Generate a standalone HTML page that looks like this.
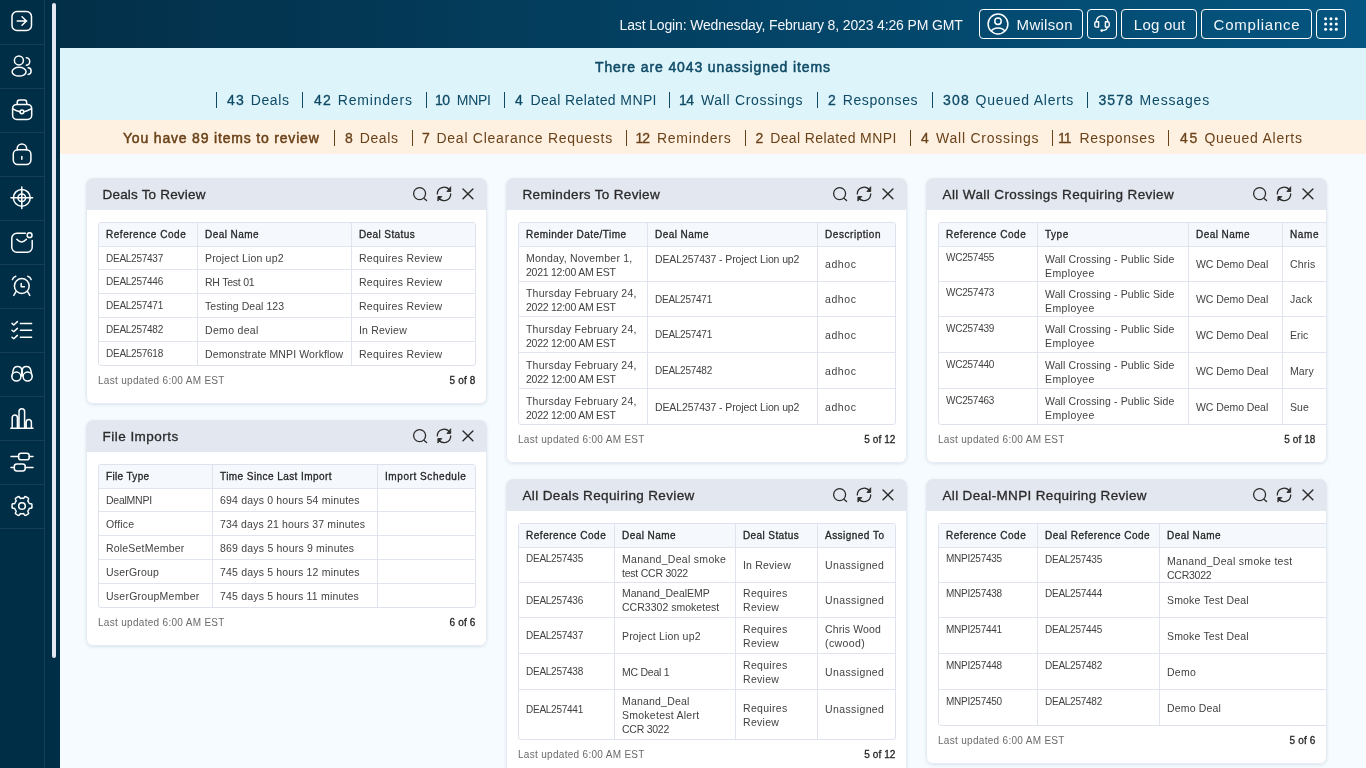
<!DOCTYPE html>
<html><head><meta charset="utf-8"><title>Dashboard</title><style>
*{margin:0;padding:0;box-sizing:border-box}
html,body{width:1366px;height:768px;overflow:hidden;background:#f5fbfe;font-family:"Liberation Sans",sans-serif}
#wrap{position:absolute;left:0;top:0;width:1366px;height:768px;will-change:transform}
#sidebar{position:absolute;left:0;top:0;width:45px;height:768px;background:#002e46;border-right:1px solid #173f57}
.si{position:absolute;left:0;width:44px;height:44px}
.si svg{position:absolute;left:0;top:0}
.sdiv{position:absolute;left:0;width:44px;height:1px;background:#173f57}
#sbtrack{position:absolute;left:45px;top:0;width:15px;height:768px;background:#002e46}
#thumb{position:absolute;left:7px;top:3px;width:4px;height:655px;border-radius:2px;background:#e4e7f2}
#header{position:absolute;left:60px;top:0;width:1306px;height:48px;background:linear-gradient(90deg,#032f48 0%,#045580 100%);color:#fff}
.ht0{position:absolute;line-height:16px;white-space:nowrap;color:#f4f7fa}
.hb{position:absolute;top:9px;height:30px;border:1px solid #fff;border-radius:4px;display:flex;align-items:center;justify-content:center}
.hsvg{position:absolute;display:block}
.gdot{position:absolute;width:2.6px;height:2.6px;border-radius:50%;background:#fff}
.uic{position:absolute;left:6.5px;top:2.5px;width:24px;height:24px}
.uic svg{display:block}
#bblue{position:absolute;left:60px;top:48px;width:1306px;height:72px;background:#ddf4fa;color:#0f4a66}
#bpeach{position:absolute;left:60px;top:120px;width:1306px;height:34px;background:#fff1e2;color:#6a4219}
.bline{position:absolute;left:0;top:0;width:100%;height:100%}
.bt{position:absolute;white-space:nowrap;line-height:18px}
.bt.semi{-webkit-text-stroke:0.5px currentColor !important}
.sep{position:absolute;width:1px;height:16px;background:currentColor}
#bblue .sep{top:44px}
#bpeach .sep{top:10px}
.card{position:absolute;background:#fff;border-radius:7px;box-shadow:0 1px 3px rgba(120,140,170,0.2);overflow:hidden}
.cbd{position:absolute;left:0;right:0;top:31px;bottom:0;border:1px solid #e6eaf2;border-top:none;border-radius:0 0 7px 7px}
.ch{position:absolute;left:0;top:0;width:100%;height:32px;background:#e3e7f0}
.ctitle{position:absolute;line-height:16px;color:#2a2a2a;white-space:nowrap}
.ico{position:absolute;width:16px;height:16px}
.ico svg{display:block}
.cico{display:block}
.tb{position:absolute;border:1px solid #dde2ee;border-radius:3px;overflow:hidden}
.thbg{position:absolute;left:0;top:0;width:100%;background:#f5f9fd}
.hl1{position:absolute;left:0;width:100%;height:1px;background:#dfe4ef}
.vl1{position:absolute;top:0;width:1px;height:100%;background:#dfe4ef}
.th{position:absolute;line-height:14px;color:#262626;white-space:nowrap}
.td{position:absolute;line-height:14px;color:#424242;white-space:nowrap}
.lu{position:absolute;line-height:14px;color:#6b6b6b;white-space:nowrap}
.cnt{position:absolute;line-height:14px;color:#262626;white-space:nowrap}
</style></head>
<body><div id="wrap"><div id="sidebar"><div class="si" style="top:0px"><svg width="44" height="44" viewBox="0 0 44 44" fill="none" stroke="#fff" stroke-width="1.5" stroke-linecap="round" stroke-linejoin="round"><rect x="12" y="11.5" width="19.5" height="19" rx="5"/><path d="M17.2 21h9.5M22 16.8l4.4 4.2-4.4 4.2"/></svg></div><div class="si" style="top:44px"><svg width="44" height="44" viewBox="0 0 44 44" fill="none" stroke="#fff" stroke-width="1.5" stroke-linecap="round" stroke-linejoin="round"><circle cx="18.9" cy="16.4" r="4.5"/><ellipse cx="19.1" cy="27.7" rx="7" ry="4.4"/><path d="M26.3 13.7A3.4 3.8 0 0 1 26.3 21.3M28.1 23.8A3 3.3 0 0 1 28.1 30.4"/></svg></div><div class="si" style="top:88px"><svg width="44" height="44" viewBox="0 0 44 44" fill="none" stroke="#fff" stroke-width="1.5" stroke-linecap="round" stroke-linejoin="round"><rect x="12.6" y="16.4" width="19.1" height="15.1" rx="4.2"/><path d="M17.2 16.2v-1.8a2.4 2.4 0 0 1 2.4 -2.4h4.7a2.4 2.4 0 0 1 2.4 2.4v1.8"/><path d="M12.8 20.8c2.8 1.6 5.4 2.6 7.2 3M23.8 23.8c1.8-0.4 4.4-1.4 7.2-3"/><circle cx="21.9" cy="23.8" r="1.9"/></svg></div><div class="si" style="top:132px"><svg width="44" height="44" viewBox="0 0 44 44" fill="none" stroke="#fff" stroke-width="1.5" stroke-linecap="round" stroke-linejoin="round"><rect x="13.3" y="17.8" width="17.6" height="14.6" rx="4.4"/><path d="M17.2 18v-1.4a4.6 4.6 0 0 1 9.4 0v1.4"/><path d="M21.8 24.6v2.6"/></svg></div><div class="si" style="top:176px"><svg width="44" height="44" viewBox="0 0 44 44" fill="none" stroke="#fff" stroke-width="1.5" stroke-linecap="round" stroke-linejoin="round"><circle cx="21.8" cy="21.8" r="8.4"/><circle cx="21.8" cy="21.8" r="3.8"/><path d="M21.8 11v21.6M11 21.8h21.6"/></svg></div><div class="si" style="top:220px"><svg width="44" height="44" viewBox="0 0 44 44" fill="none" stroke="#fff" stroke-width="1.5" stroke-linecap="round" stroke-linejoin="round"><path d="M25.4 13.2h-8.6a5 5 0 0 0 -5 5v9a5 5 0 0 0 5 5h10.4a5 5 0 0 0 5 -5v-6.8"/><circle cx="29.6" cy="15.2" r="2.4"/><path d="M16.8 19.2c3.2 3.6 6.4 3.6 9.6 0"/></svg></div><div class="si" style="top:264px"><svg width="44" height="44" viewBox="0 0 44 44" fill="none" stroke="#fff" stroke-width="1.5" stroke-linecap="round" stroke-linejoin="round"><circle cx="21.8" cy="22" r="7.4"/><path d="M21.2 19.4v3.4h3.2"/><path d="M12.4 15.6a5 5 0 0 1 3.4 -3.4M27.8 12.2a5 5 0 0 1 3.4 3.4M16 27.6l-2.2 3.8M27.6 27.6l2.2 3.8"/></svg></div><div class="si" style="top:308px"><svg width="44" height="44" viewBox="0 0 44 44" fill="none" stroke="#fff" stroke-width="1.5" stroke-linecap="round" stroke-linejoin="round"><path d="M12 15.4l1.8 1.6l3.6 -3.4M12 22.2l1.8 1.6l3.6 -3.4M12 29.2l1.8 1.6l3.6 -3.4"/><path d="M20.4 15.4h11.2M20.4 22.2h11.2M20.4 29.2h11.2"/></svg></div><div class="si" style="top:352px"><svg width="44" height="44" viewBox="0 0 44 44" fill="none" stroke="#fff" stroke-width="1.5" stroke-linecap="round" stroke-linejoin="round"><path d="M11.9 24.6L13.2 18.2C13.7 15.8 15.4 14.45 17.6 14.45C20 14.45 21.7 15.8 21.7 18.2V24M32.1 24.6L30.8 18.2C30.3 15.8 28.6 14.45 26.4 14.45C24 14.45 22.3 15.8 22.3 18.2V24"/><circle cx="16.4" cy="24.6" r="4.5" fill="#002e46"/><circle cx="27.6" cy="24.6" r="4.5" fill="#002e46"/></svg></div><div class="si" style="top:396px"><svg width="44" height="44" viewBox="0 0 44 44" fill="none" stroke="#fff" stroke-width="1.5" stroke-linecap="round" stroke-linejoin="round"><path d="M10.8 32.2h22.2"/><path d="M12.2 32v-10.4a2.6 2.6 0 0 1 5.2 0v10.4M19 32v-16.4a2.8 2.8 0 0 1 5.6 0v16.4M26.2 32v-5.8a2.6 2.6 0 0 1 5.2 0v5.8"/></svg></div><div class="si" style="top:440px"><svg width="44" height="44" viewBox="0 0 44 44" fill="none" stroke="#fff" stroke-width="1.5" stroke-linecap="round" stroke-linejoin="round"><path d="M11 16.6h7.6M29.2 16.6h3.8M11 27.5h3.4M25.2 27.5h7.8"/><rect x="18.6" y="13.2" width="10.6" height="6.6" rx="2.4"/><rect x="14.3" y="24" width="10.9" height="7" rx="2.4"/></svg></div><div class="si" style="top:484px"><svg width="44" height="44" viewBox="0 0 44 44" fill="none" stroke="#fff" stroke-width="1.5" stroke-linecap="round" stroke-linejoin="round"><path d="M32.00 22.00L32.00 22.17L31.99 22.35L31.99 22.52L31.98 22.70L31.96 22.87L31.95 23.05L31.93 23.22L31.90 23.39L31.88 23.56L31.85 23.74L31.80 23.91L31.63 24.05L31.34 24.16L30.97 24.24L30.55 24.29L30.13 24.33L29.76 24.37L29.47 24.43L29.30 24.51L29.24 24.63L29.19 24.76L29.14 24.88L29.09 25.01L29.03 25.13L28.98 25.25L28.92 25.38L28.86 25.50L28.80 25.61L28.73 25.73L28.67 25.85L28.60 25.97L28.53 26.08L28.46 26.19L28.38 26.31L28.31 26.42L28.23 26.53L28.15 26.63L28.07 26.74L27.98 26.85L27.90 26.95L27.82 27.06L27.83 27.25L27.93 27.53L28.08 27.87L28.26 28.26L28.42 28.65L28.54 29.01L28.59 29.32L28.55 29.54L28.43 29.66L28.29 29.77L28.16 29.88L28.02 29.99L27.88 30.09L27.74 30.19L27.59 30.29L27.45 30.39L27.30 30.48L27.15 30.57L27.00 30.66L26.85 30.75L26.69 30.83L26.54 30.91L26.38 30.99L26.23 31.06L26.07 31.14L25.91 31.21L25.75 31.27L25.58 31.34L25.42 31.40L25.25 31.44L25.04 31.37L24.80 31.17L24.55 30.89L24.29 30.55L24.05 30.21L23.82 29.90L23.63 29.68L23.47 29.57L23.34 29.58L23.20 29.61L23.07 29.63L22.94 29.64L22.80 29.66L22.67 29.67L22.54 29.68L22.40 29.69L22.27 29.70L22.13 29.70L22.00 29.70L21.87 29.70L21.73 29.70L21.60 29.69L21.46 29.68L21.33 29.67L21.20 29.66L21.06 29.64L20.93 29.63L20.80 29.61L20.66 29.58L20.53 29.57L20.37 29.68L20.18 29.90L19.95 30.21L19.71 30.55L19.45 30.89L19.20 31.17L18.96 31.37L18.75 31.44L18.58 31.40L18.42 31.34L18.25 31.27L18.09 31.21L17.93 31.14L17.77 31.06L17.62 30.99L17.46 30.91L17.31 30.83L17.15 30.75L17.00 30.66L16.85 30.57L16.70 30.48L16.55 30.39L16.41 30.29L16.26 30.19L16.12 30.09L15.98 29.99L15.84 29.88L15.71 29.77L15.57 29.66L15.45 29.54L15.41 29.32L15.46 29.01L15.58 28.65L15.74 28.26L15.92 27.87L16.07 27.53L16.17 27.25L16.18 27.06L16.10 26.95L16.02 26.85L15.93 26.74L15.85 26.63L15.77 26.53L15.69 26.42L15.62 26.31L15.54 26.19L15.47 26.08L15.40 25.97L15.33 25.85L15.27 25.73L15.20 25.61L15.14 25.50L15.08 25.38L15.02 25.25L14.97 25.13L14.91 25.01L14.86 24.88L14.81 24.76L14.76 24.63L14.70 24.51L14.53 24.43L14.24 24.37L13.87 24.33L13.45 24.29L13.03 24.24L12.66 24.16L12.37 24.05L12.20 23.91L12.15 23.74L12.12 23.56L12.10 23.39L12.07 23.22L12.05 23.05L12.04 22.87L12.02 22.70L12.01 22.52L12.01 22.35L12.00 22.17L12.00 22.00L12.00 21.83L12.01 21.65L12.01 21.48L12.02 21.30L12.04 21.13L12.05 20.95L12.07 20.78L12.10 20.61L12.12 20.44L12.15 20.26L12.20 20.09L12.37 19.95L12.66 19.84L13.03 19.76L13.45 19.71L13.87 19.67L14.24 19.63L14.53 19.57L14.70 19.49L14.76 19.37L14.81 19.24L14.86 19.12L14.91 18.99L14.97 18.87L15.02 18.75L15.08 18.62L15.14 18.50L15.20 18.39L15.27 18.27L15.33 18.15L15.40 18.03L15.47 17.92L15.54 17.81L15.62 17.69L15.69 17.58L15.77 17.47L15.85 17.37L15.93 17.26L16.02 17.15L16.10 17.05L16.18 16.94L16.17 16.75L16.07 16.47L15.92 16.13L15.74 15.74L15.58 15.35L15.46 14.99L15.41 14.68L15.45 14.46L15.57 14.34L15.71 14.23L15.84 14.12L15.98 14.01L16.12 13.91L16.26 13.81L16.41 13.71L16.55 13.61L16.70 13.52L16.85 13.43L17.00 13.34L17.15 13.25L17.31 13.17L17.46 13.09L17.62 13.01L17.77 12.94L17.93 12.86L18.09 12.79L18.25 12.73L18.42 12.66L18.58 12.60L18.75 12.56L18.96 12.63L19.20 12.83L19.45 13.11L19.71 13.45L19.95 13.79L20.18 14.10L20.37 14.32L20.53 14.43L20.66 14.42L20.80 14.39L20.93 14.37L21.06 14.36L21.20 14.34L21.33 14.33L21.46 14.32L21.60 14.31L21.73 14.30L21.87 14.30L22.00 14.30L22.13 14.30L22.27 14.30L22.40 14.31L22.54 14.32L22.67 14.33L22.80 14.34L22.94 14.36L23.07 14.37L23.20 14.39L23.34 14.42L23.47 14.43L23.63 14.32L23.82 14.10L24.05 13.79L24.29 13.45L24.55 13.11L24.80 12.83L25.04 12.63L25.25 12.56L25.42 12.60L25.58 12.66L25.75 12.73L25.91 12.79L26.07 12.86L26.23 12.94L26.38 13.01L26.54 13.09L26.69 13.17L26.85 13.25L27.00 13.34L27.15 13.43L27.30 13.52L27.45 13.61L27.59 13.71L27.74 13.81L27.88 13.91L28.02 14.01L28.16 14.12L28.29 14.23L28.43 14.34L28.55 14.46L28.59 14.68L28.54 14.99L28.42 15.35L28.26 15.74L28.08 16.13L27.93 16.47L27.83 16.75L27.82 16.94L27.90 17.05L27.98 17.15L28.07 17.26L28.15 17.37L28.23 17.47L28.31 17.58L28.38 17.69L28.46 17.81L28.53 17.92L28.60 18.03L28.67 18.15L28.73 18.27L28.80 18.39L28.86 18.50L28.92 18.62L28.98 18.75L29.03 18.87L29.09 18.99L29.14 19.12L29.19 19.24L29.24 19.37L29.30 19.49L29.47 19.57L29.76 19.63L30.13 19.67L30.55 19.71L30.97 19.76L31.34 19.84L31.63 19.95L31.80 20.09L31.85 20.26L31.88 20.44L31.90 20.61L31.93 20.78L31.95 20.95L31.96 21.13L31.98 21.30L31.99 21.48L31.99 21.65L32.00 21.83L32.00 22.00Z"/><circle cx="22.0" cy="22.0" r="3.3"/></svg></div><div class="sdiv" style="top:44px"></div><div class="sdiv" style="top:88px"></div><div class="sdiv" style="top:132px"></div><div class="sdiv" style="top:176px"></div><div class="sdiv" style="top:220px"></div><div class="sdiv" style="top:264px"></div><div class="sdiv" style="top:308px"></div><div class="sdiv" style="top:352px"></div><div class="sdiv" style="top:396px"></div><div class="sdiv" style="top:440px"></div><div class="sdiv" style="top:484px"></div><div class="sdiv" style="top:528px"></div></div><div id="sbtrack"><div id="thumb"></div></div><div id="header"><div class="ht0" style="top:17.0px;font-size:14px;letter-spacing:-0.144px;left:559.5px;">Last Login: Wednesday, February 8, 2023 4:26 PM GMT</div><div class="hb" style="left:919px;width:104px"></div><svg class="hsvg" style="left:926px;top:12px" width="24" height="24" viewBox="0 0 24 24" fill="none" stroke="#fff" stroke-width="1.5"><circle cx="12" cy="12" r="9.9"/><circle cx="12" cy="9.3" r="3.2"/><path d="M5.3 19.2c1-1.9 3.6-3.1 6.7-3.1s5.7 1.2 6.7 3.1"/></svg><div class="ht0" style="top:16.5px;font-size:15px;letter-spacing:0.289px;left:956.6px;">Mwilson</div><div class="hb" style="left:1027px;width:30px"></div><svg class="hsvg" style="left:1030px;top:12px" width="24" height="24" viewBox="0 0 24 24" fill="none" stroke="#fff" stroke-width="1.4" stroke-linecap="round" stroke-linejoin="round"><path d="M6.3 9.6a5.7 5.7 0 0 1 11.4 0"/><path d="M8.6 9.7H6.4a1.6 1.6 0 0 0 -1.6 1.6v2.2a1.6 1.6 0 0 0 1.6 1.6h2.2z"/><path d="M15.4 9.7h2.2a1.6 1.6 0 0 1 1.6 1.6v2.2a1.6 1.6 0 0 1 -1.6 1.6h-2.2z"/><path d="M17.2 15.3c0 1.8-1.6 3-4.6 3.1"/><circle cx="11.7" cy="18.6" r="1.3" fill="#fff" stroke="none"/></svg><div class="hb" style="left:1061px;width:76px"></div><div class="ht0" style="top:16.5px;font-size:15px;letter-spacing:0.236px;left:1073.8px;">Log out</div><div class="hb" style="left:1141px;width:111px"></div><div class="ht0" style="top:16.5px;font-size:15px;letter-spacing:0.760px;left:1153.6px;">Compliance</div><div class="hb" style="left:1256px;width:30px"></div><svg class="hsvg" style="left:1264px;top:17px" width="16" height="16" viewBox="0 0 16 16" fill="#fff"><circle cx="1.60" cy="1.70" r="1.5"/><circle cx="1.60" cy="7.00" r="1.5"/><circle cx="1.60" cy="12.30" r="1.5"/><circle cx="6.95" cy="1.70" r="1.5"/><circle cx="6.95" cy="7.00" r="1.5"/><circle cx="6.95" cy="12.30" r="1.5"/><circle cx="12.30" cy="1.70" r="1.5"/><circle cx="12.30" cy="7.00" r="1.5"/><circle cx="12.30" cy="12.30" r="1.5"/></svg></div><div id="bblue"><div class="bt semi" style="top:10.0px;font-size:14px;letter-spacing:0.882px;left:535.0px;-webkit-text-stroke:0.3px currentColor;">There are 4043 unassigned items</div><div class="bline"><div class="sep" style="left:156px"></div><div class="sep" style="left:242px"></div><div class="sep" style="left:366px"></div><div class="sep" style="left:444px"></div><div class="sep" style="left:609px"></div><div class="sep" style="left:757px"></div><div class="sep" style="left:872px"></div><div class="sep" style="left:1027px"></div><div class="bt" style="top:43.0px;font-size:14px;letter-spacing:1.314px;left:166.9px;-webkit-text-stroke:0.3px currentColor;">43</div><div class="bt" style="top:43.0px;font-size:14px;letter-spacing:0.641px;left:190.7px;">Deals</div><div class="bt" style="top:43.0px;font-size:14px;letter-spacing:1.314px;left:254.0px;-webkit-text-stroke:0.3px currentColor;">42</div><div class="bt" style="top:43.0px;font-size:14px;letter-spacing:0.801px;left:277.8px;">Reminders</div><div class="bt" style="top:43.0px;font-size:14px;letter-spacing:-0.436px;left:374.9px;-webkit-text-stroke:0.3px currentColor;">10</div><div class="bt" style="top:43.0px;font-size:14px;letter-spacing:-0.300px;left:396.8px;">MNPI</div><div class="bt" style="top:43.0px;font-size:14px;letter-spacing:2.114px;left:454.9px;-webkit-text-stroke:0.3px currentColor;">4</div><div class="bt" style="top:43.0px;font-size:14px;letter-spacing:0.393px;left:470.4px;">Deal Related MNPI</div><div class="bt" style="top:43.0px;font-size:14px;letter-spacing:-0.586px;left:619.1px;-webkit-text-stroke:0.3px currentColor;">14</div><div class="bt" style="top:43.0px;font-size:14px;letter-spacing:0.682px;left:640.9px;">Wall Crossings</div><div class="bt" style="top:43.0px;font-size:14px;letter-spacing:1.414px;left:768.0px;-webkit-text-stroke:0.3px currentColor;">2</div><div class="bt" style="top:43.0px;font-size:14px;letter-spacing:0.584px;left:782.8px;">Responses</div><div class="bt" style="top:43.0px;font-size:14px;letter-spacing:1.181px;left:883.0px;-webkit-text-stroke:0.3px currentColor;">308</div><div class="bt" style="top:43.0px;font-size:14px;letter-spacing:0.754px;left:915.5px;">Queued Alerts</div><div class="bt" style="top:43.0px;font-size:14px;letter-spacing:0.989px;left:1038.6px;-webkit-text-stroke:0.3px currentColor;">3578</div><div class="bt" style="top:43.0px;font-size:14px;letter-spacing:0.849px;left:1079.5px;">Messages</div></div></div><div id="bpeach"><div class="bline"><div class="bt semi" style="top:9.0px;font-size:14px;letter-spacing:0.816px;left:63.0px;-webkit-text-stroke:0.3px currentColor;">You have 89 items to review</div><div class="sep" style="left:274px"></div><div class="sep" style="left:352px"></div><div class="sep" style="left:566px"></div><div class="sep" style="left:685px"></div><div class="sep" style="left:850px"></div><div class="sep" style="left:992px"></div><div class="sep" style="left:1108px"></div><div class="bt" style="top:9.0px;font-size:14px;letter-spacing:1.214px;left:285.1px;-webkit-text-stroke:0.3px currentColor;">8</div><div class="bt" style="top:9.0px;font-size:14px;letter-spacing:0.641px;left:299.7px;">Deals</div><div class="bt" style="top:9.0px;font-size:14px;letter-spacing:0.414px;left:361.9px;-webkit-text-stroke:0.3px currentColor;">7</div><div class="bt" style="top:9.0px;font-size:14px;letter-spacing:0.733px;left:376.5px;">Deal Clearance Requests</div><div class="bt" style="top:9.0px;font-size:14px;letter-spacing:-1.000px;left:575.5px;-webkit-text-stroke:0.3px currentColor;">12</div><div class="bt" style="top:9.0px;font-size:14px;letter-spacing:0.768px;left:596.9px;">Reminders</div><div class="bt" style="top:9.0px;font-size:14px;letter-spacing:1.014px;left:695.6px;-webkit-text-stroke:0.3px currentColor;">2</div><div class="bt" style="top:9.0px;font-size:14px;letter-spacing:0.393px;left:710.2px;">Deal Related MNPI</div><div class="bt" style="top:9.0px;font-size:14px;letter-spacing:1.814px;left:860.9px;-webkit-text-stroke:0.3px currentColor;">4</div><div class="bt" style="top:9.0px;font-size:14px;letter-spacing:0.739px;left:876.1px;">Wall Crossings</div><div class="bt" style="top:9.0px;font-size:14px;letter-spacing:-1.000px;left:998.1px;-webkit-text-stroke:0.3px currentColor;">11</div><div class="bt" style="top:9.0px;font-size:14px;letter-spacing:0.640px;left:1019.5px;">Responses</div><div class="bt" style="top:9.0px;font-size:14px;letter-spacing:1.564px;left:1120.1px;-webkit-text-stroke:0.3px currentColor;">45</div><div class="bt" style="top:9.0px;font-size:14px;letter-spacing:0.739px;left:1144.4px;">Queued Alerts</div></div></div><div class="card" style="left:86px;top:178px;width:401px;height:226px"><div class="ch"><div class="ctitle" style="top:9.0px;font-size:13.5px;letter-spacing:0.188px;left:16.5px;-webkit-text-stroke:0.3px currentColor;">Deals To Review</div><span style="position:absolute;left:321px;top:0"><svg class="cico" width="80" height="32" viewBox="0 0 80 32" fill="none" stroke="#2b2b2b" stroke-width="1.3" stroke-linecap="round"><circle cx="12.6" cy="15.6" r="6"/><path d="M17.2 20.4l2.4 2.1"/><path d="M30.3 15.9A6.7 6.7 0 0 1 42.5 12.1"/><path d="M43.7 15.9A6.7 6.7 0 0 1 31.5 19.7"/><path d="M43.7 9.1V13.5H40.3Z" fill="#2b2b2b" stroke-width="0.9" stroke-linejoin="round"/><path d="M30.9 22.7V18.5H34.5Z" fill="#2b2b2b" stroke-width="0.9" stroke-linejoin="round"/><path d="M56 11.1L65.9 20.7M65.9 11.1L56 20.7" stroke-width="1.4"/></svg></span></div><div class="tb" style="left:12.0px;top:44.0px;width:378.0px;height:144.0px"><div class="thbg" style="height:23.0px"></div><div class="hl1" style="top:23.0px"></div><div class="hl1" style="top:46.0px"></div><div class="hl1" style="top:70.0px"></div><div class="hl1" style="top:94.0px"></div><div class="hl1" style="top:118.0px"></div><div class="vl1" style="left:98.0px"></div><div class="vl1" style="left:252.0px"></div><div class="th" style="top:4.8px;font-size:10px;letter-spacing:0.533px;left:7.0px;-webkit-text-stroke:0.3px currentColor;">Reference Code</div><div class="th" style="top:4.8px;font-size:10px;letter-spacing:0.439px;left:106.0px;-webkit-text-stroke:0.3px currentColor;">Deal Name</div><div class="th" style="top:4.8px;font-size:10px;letter-spacing:0.394px;left:260.0px;-webkit-text-stroke:0.3px currentColor;">Deal Status</div><div class="td" style="top:28.7px;font-size:10px;letter-spacing:-0.250px;left:7.0px;">DEAL257437</div><div class="td" style="top:28.3px;font-size:10.5px;letter-spacing:0.173px;left:106.0px;">Project Lion up2</div><div class="td" style="top:28.3px;font-size:10.5px;letter-spacing:0.274px;left:260.0px;">Requires Review</div><div class="td" style="top:52.2px;font-size:10px;letter-spacing:-0.250px;left:7.0px;">DEAL257446</div><div class="td" style="top:51.8px;font-size:10.5px;letter-spacing:-0.232px;left:106.0px;">RH Test 01</div><div class="td" style="top:51.8px;font-size:10.5px;letter-spacing:0.274px;left:260.0px;">Requires Review</div><div class="td" style="top:76.2px;font-size:10px;letter-spacing:-0.250px;left:7.0px;">DEAL257471</div><div class="td" style="top:75.8px;font-size:10.5px;letter-spacing:0.058px;left:106.0px;">Testing Deal 123</div><div class="td" style="top:75.8px;font-size:10.5px;letter-spacing:0.274px;left:260.0px;">Requires Review</div><div class="td" style="top:100.2px;font-size:10px;letter-spacing:-0.250px;left:7.0px;">DEAL257482</div><div class="td" style="top:99.8px;font-size:10.5px;letter-spacing:0.322px;left:106.0px;">Demo deal</div><div class="td" style="top:99.8px;font-size:10.5px;letter-spacing:0.201px;left:260.0px;">In Review</div><div class="td" style="top:124.2px;font-size:10px;letter-spacing:-0.250px;left:7.0px;">DEAL257618</div><div class="td" style="top:123.8px;font-size:10.5px;letter-spacing:0.122px;left:106.0px;">Demonstrate MNPI Workflow</div><div class="td" style="top:123.8px;font-size:10.5px;letter-spacing:0.274px;left:260.0px;">Requires Review</div></div><div class="lu" style="top:196.3px;font-size:10px;letter-spacing:0.301px;left:12.0px;">Last updated 6:00 AM EST</div><div class="cnt" style="top:196.3px;font-size:10px;letter-spacing:0.145px;right:11.5px;-webkit-text-stroke:0.3px currentColor;">5 of 8</div><div class="cbd"></div></div><div class="card" style="left:86px;top:420px;width:401px;height:226px"><div class="ch"><div class="ctitle" style="top:9.0px;font-size:13.5px;letter-spacing:0.478px;left:16.5px;-webkit-text-stroke:0.3px currentColor;">File Imports</div><span style="position:absolute;left:321px;top:0"><svg class="cico" width="80" height="32" viewBox="0 0 80 32" fill="none" stroke="#2b2b2b" stroke-width="1.3" stroke-linecap="round"><circle cx="12.6" cy="15.6" r="6"/><path d="M17.2 20.4l2.4 2.1"/><path d="M30.3 15.9A6.7 6.7 0 0 1 42.5 12.1"/><path d="M43.7 15.9A6.7 6.7 0 0 1 31.5 19.7"/><path d="M43.7 9.1V13.5H40.3Z" fill="#2b2b2b" stroke-width="0.9" stroke-linejoin="round"/><path d="M30.9 22.7V18.5H34.5Z" fill="#2b2b2b" stroke-width="0.9" stroke-linejoin="round"/><path d="M56 11.1L65.9 20.7M65.9 11.1L56 20.7" stroke-width="1.4"/></svg></span></div><div class="tb" style="left:12.0px;top:44.0px;width:378.0px;height:144.0px"><div class="thbg" style="height:23.0px"></div><div class="hl1" style="top:23.0px"></div><div class="hl1" style="top:46.0px"></div><div class="hl1" style="top:70.0px"></div><div class="hl1" style="top:94.0px"></div><div class="hl1" style="top:118.0px"></div><div class="vl1" style="left:113.0px"></div><div class="vl1" style="left:278.0px"></div><div class="th" style="top:4.8px;font-size:10px;letter-spacing:0.342px;left:7.0px;-webkit-text-stroke:0.3px currentColor;">File Type</div><div class="th" style="top:4.8px;font-size:10px;letter-spacing:0.434px;left:121.0px;-webkit-text-stroke:0.3px currentColor;">Time Since Last Import</div><div class="th" style="top:4.8px;font-size:10px;letter-spacing:0.572px;left:286.0px;-webkit-text-stroke:0.3px currentColor;">Import Schedule</div><div class="td" style="top:28.3px;font-size:10.5px;letter-spacing:-0.250px;left:7.0px;">DealMNPI</div><div class="td" style="top:28.3px;font-size:10.5px;letter-spacing:0.183px;left:121.0px;">694 days 0 hours 54 minutes</div><div class="td" style="top:51.8px;font-size:10.5px;letter-spacing:0.162px;left:7.0px;">Office</div><div class="td" style="top:51.8px;font-size:10.5px;letter-spacing:0.162px;left:121.0px;">734 days 21 hours 37 minutes</div><div class="td" style="top:75.8px;font-size:10.5px;letter-spacing:0.195px;left:7.0px;">RoleSetMember</div><div class="td" style="top:75.8px;font-size:10.5px;letter-spacing:0.205px;left:121.0px;">869 days 5 hours 9 minutes</div><div class="td" style="top:99.8px;font-size:10.5px;letter-spacing:0.192px;left:7.0px;">UserGroup</div><div class="td" style="top:99.8px;font-size:10.5px;letter-spacing:0.183px;left:121.0px;">745 days 5 hours 12 minutes</div><div class="td" style="top:123.8px;font-size:10.5px;letter-spacing:0.245px;left:7.0px;">UserGroupMember</div><div class="td" style="top:123.8px;font-size:10.5px;letter-spacing:0.183px;left:121.0px;">745 days 5 hours 11 minutes</div></div><div class="lu" style="top:195.7px;font-size:10px;letter-spacing:0.301px;left:12.0px;">Last updated 6:00 AM EST</div><div class="cnt" style="top:195.7px;font-size:10px;letter-spacing:0.145px;right:11.5px;-webkit-text-stroke:0.3px currentColor;">6 of 6</div><div class="cbd"></div></div><div class="card" style="left:506px;top:178px;width:401px;height:285px"><div class="ch"><div class="ctitle" style="top:9.0px;font-size:13.5px;letter-spacing:0.340px;left:16.5px;-webkit-text-stroke:0.3px currentColor;">Reminders To Review</div><span style="position:absolute;left:321px;top:0"><svg class="cico" width="80" height="32" viewBox="0 0 80 32" fill="none" stroke="#2b2b2b" stroke-width="1.3" stroke-linecap="round"><circle cx="12.6" cy="15.6" r="6"/><path d="M17.2 20.4l2.4 2.1"/><path d="M30.3 15.9A6.7 6.7 0 0 1 42.5 12.1"/><path d="M43.7 15.9A6.7 6.7 0 0 1 31.5 19.7"/><path d="M43.7 9.1V13.5H40.3Z" fill="#2b2b2b" stroke-width="0.9" stroke-linejoin="round"/><path d="M30.9 22.7V18.5H34.5Z" fill="#2b2b2b" stroke-width="0.9" stroke-linejoin="round"/><path d="M56 11.1L65.9 20.7M65.9 11.1L56 20.7" stroke-width="1.4"/></svg></span></div><div class="tb" style="left:12.0px;top:44.0px;width:378.0px;height:203.0px"><div class="thbg" style="height:23.0px"></div><div class="hl1" style="top:23.0px"></div><div class="hl1" style="top:58.0px"></div><div class="hl1" style="top:93.0px"></div><div class="hl1" style="top:129.0px"></div><div class="hl1" style="top:165.0px"></div><div class="vl1" style="left:128.0px"></div><div class="vl1" style="left:298.0px"></div><div class="th" style="top:4.8px;font-size:10px;letter-spacing:0.481px;left:7.0px;-webkit-text-stroke:0.3px currentColor;">Reminder Date/Time</div><div class="th" style="top:4.8px;font-size:10px;letter-spacing:0.439px;left:136.0px;-webkit-text-stroke:0.3px currentColor;">Deal Name</div><div class="th" style="top:4.8px;font-size:10px;letter-spacing:0.553px;left:306.0px;-webkit-text-stroke:0.3px currentColor;">Description</div><div class="td" style="top:28.4px;font-size:10.5px;letter-spacing:0.204px;left:7.0px;"><span style="letter-spacing:0.204px">Monday, November 1,</span><br><span style="letter-spacing:-0.250px">2021 12:00 AM EST</span></div><div class="td" style="top:28.7px;font-size:10.5px;letter-spacing:-0.116px;left:136.0px;">DEAL257437 - Project Lion up2</div><div class="td" style="top:34.3px;font-size:10.5px;letter-spacing:0.567px;left:306.0px;">adhoc</div><div class="td" style="top:63.4px;font-size:10.5px;letter-spacing:0.208px;left:7.0px;"><span style="letter-spacing:0.208px">Thursday February 24,</span><br><span style="letter-spacing:-0.250px">2022 12:00 AM EST</span></div><div class="td" style="top:69.7px;font-size:10px;letter-spacing:-0.250px;left:136.0px;">DEAL257471</div><div class="td" style="top:69.3px;font-size:10.5px;letter-spacing:0.567px;left:306.0px;">adhoc</div><div class="td" style="top:98.6px;font-size:10.5px;letter-spacing:0.208px;left:7.0px;"><span style="letter-spacing:0.208px">Thursday February 24,</span><br><span style="letter-spacing:-0.250px">2022 12:00 AM EST</span></div><div class="td" style="top:105.2px;font-size:10px;letter-spacing:-0.250px;left:136.0px;">DEAL257471</div><div class="td" style="top:104.8px;font-size:10.5px;letter-spacing:0.567px;left:306.0px;">adhoc</div><div class="td" style="top:134.6px;font-size:10.5px;letter-spacing:0.208px;left:7.0px;"><span style="letter-spacing:0.208px">Thursday February 24,</span><br><span style="letter-spacing:-0.250px">2022 12:00 AM EST</span></div><div class="td" style="top:141.2px;font-size:10px;letter-spacing:-0.250px;left:136.0px;">DEAL257482</div><div class="td" style="top:140.8px;font-size:10.5px;letter-spacing:0.567px;left:306.0px;">adhoc</div><div class="td" style="top:170.5px;font-size:10.5px;letter-spacing:0.208px;left:7.0px;"><span style="letter-spacing:0.208px">Thursday February 24,</span><br><span style="letter-spacing:-0.250px">2022 12:00 AM EST</span></div><div class="td" style="top:176.8px;font-size:10.5px;letter-spacing:-0.116px;left:136.0px;">DEAL257437 - Project Lion up2</div><div class="td" style="top:176.8px;font-size:10.5px;letter-spacing:0.567px;left:306.0px;">adhoc</div></div><div class="lu" style="top:255.1px;font-size:10px;letter-spacing:0.301px;left:12.0px;">Last updated 6:00 AM EST</div><div class="cnt" style="top:255.1px;font-size:10px;letter-spacing:0.108px;right:11.5px;-webkit-text-stroke:0.3px currentColor;">5 of 12</div><div class="cbd"></div></div><div class="card" style="left:506px;top:479px;width:401px;height:301px"><div class="ch"><div class="ctitle" style="top:9.0px;font-size:13.5px;letter-spacing:0.359px;left:16.5px;-webkit-text-stroke:0.3px currentColor;">All Deals Requiring Review</div><span style="position:absolute;left:321px;top:0"><svg class="cico" width="80" height="32" viewBox="0 0 80 32" fill="none" stroke="#2b2b2b" stroke-width="1.3" stroke-linecap="round"><circle cx="12.6" cy="15.6" r="6"/><path d="M17.2 20.4l2.4 2.1"/><path d="M30.3 15.9A6.7 6.7 0 0 1 42.5 12.1"/><path d="M43.7 15.9A6.7 6.7 0 0 1 31.5 19.7"/><path d="M43.7 9.1V13.5H40.3Z" fill="#2b2b2b" stroke-width="0.9" stroke-linejoin="round"/><path d="M30.9 22.7V18.5H34.5Z" fill="#2b2b2b" stroke-width="0.9" stroke-linejoin="round"/><path d="M56 11.1L65.9 20.7M65.9 11.1L56 20.7" stroke-width="1.4"/></svg></span></div><div class="tb" style="left:12.0px;top:44.0px;width:378.0px;height:217.0px"><div class="thbg" style="height:23.0px"></div><div class="hl1" style="top:23.0px"></div><div class="hl1" style="top:58.0px"></div><div class="hl1" style="top:93.0px"></div><div class="hl1" style="top:129.0px"></div><div class="hl1" style="top:165.0px"></div><div class="vl1" style="left:95.0px"></div><div class="vl1" style="left:216.0px"></div><div class="vl1" style="left:298.0px"></div><div class="th" style="top:4.8px;font-size:10px;letter-spacing:0.533px;left:7.0px;-webkit-text-stroke:0.3px currentColor;">Reference Code</div><div class="th" style="top:4.8px;font-size:10px;letter-spacing:0.439px;left:103.0px;-webkit-text-stroke:0.3px currentColor;">Deal Name</div><div class="th" style="top:4.8px;font-size:10px;letter-spacing:0.394px;left:224.0px;-webkit-text-stroke:0.3px currentColor;">Deal Status</div><div class="th" style="top:4.8px;font-size:10px;letter-spacing:0.471px;left:306.0px;-webkit-text-stroke:0.3px currentColor;">Assigned To</div><div class="td" style="top:28.1px;font-size:10px;letter-spacing:-0.250px;left:7.0px;">DEAL257435</div><div class="td" style="top:27.7px;font-size:10.5px;letter-spacing:0.292px;left:103.0px;"><span style="letter-spacing:0.292px">Manand_Deal smoke</span><br><span style="letter-spacing:-0.228px">test CCR 3022</span></div><div class="td" style="top:34.3px;font-size:10.5px;letter-spacing:0.201px;left:224.0px;">In Review</div><div class="td" style="top:34.3px;font-size:10.5px;letter-spacing:0.387px;left:306.0px;">Unassigned</div><div class="td" style="top:69.7px;font-size:10px;letter-spacing:-0.250px;left:7.0px;">DEAL257436</div><div class="td" style="top:62.3px;font-size:10.5px;letter-spacing:0.020px;left:103.0px;"><span style="letter-spacing:-0.033px">Manand_DealEMP</span><br><span style="letter-spacing:0.020px">CCR3302 smoketest</span></div><div class="td" style="top:62.3px;font-size:10.5px;letter-spacing:0.318px;left:224.0px;"><span style="letter-spacing:0.318px">Requires</span><br><span style="letter-spacing:0.299px">Review</span></div><div class="td" style="top:69.3px;font-size:10.5px;letter-spacing:0.387px;left:306.0px;">Unassigned</div><div class="td" style="top:105.2px;font-size:10px;letter-spacing:-0.250px;left:7.0px;">DEAL257437</div><div class="td" style="top:104.8px;font-size:10.5px;letter-spacing:0.173px;left:103.0px;">Project Lion up2</div><div class="td" style="top:97.8px;font-size:10.5px;letter-spacing:0.318px;left:224.0px;"><span style="letter-spacing:0.318px">Requires</span><br><span style="letter-spacing:0.299px">Review</span></div><div class="td" style="top:97.8px;font-size:10.5px;letter-spacing:0.118px;left:306.0px;"><span style="letter-spacing:0.118px">Chris Wood</span><br><span style="letter-spacing:0.382px">(cwood)</span></div><div class="td" style="top:141.2px;font-size:10px;letter-spacing:-0.250px;left:7.0px;">DEAL257438</div><div class="td" style="top:140.8px;font-size:10.5px;letter-spacing:-0.244px;left:103.0px;">MC Deal 1</div><div class="td" style="top:133.8px;font-size:10.5px;letter-spacing:0.318px;left:224.0px;"><span style="letter-spacing:0.318px">Requires</span><br><span style="letter-spacing:0.299px">Review</span></div><div class="td" style="top:140.8px;font-size:10.5px;letter-spacing:0.387px;left:306.0px;">Unassigned</div><div class="td" style="top:178.5px;font-size:10px;letter-spacing:-0.250px;left:7.0px;">DEAL257441</div><div class="td" style="top:169.8px;font-size:10.5px;letter-spacing:0.256px;left:103.0px;"><span style="letter-spacing:0.194px">Manand_Deal</span><br><span style="letter-spacing:0.256px">Smoketest Alert</span><br><span style="letter-spacing:-0.250px">CCR 3022</span></div><div class="td" style="top:176.8px;font-size:10.5px;letter-spacing:0.318px;left:224.0px;"><span style="letter-spacing:0.318px">Requires</span><br><span style="letter-spacing:0.299px">Review</span></div><div class="td" style="top:177.8px;font-size:10.5px;letter-spacing:0.387px;left:306.0px;">Unassigned</div></div><div class="lu" style="top:268.8px;font-size:10px;letter-spacing:0.301px;left:12.0px;">Last updated 6:00 AM EST</div><div class="cnt" style="top:268.8px;font-size:10px;letter-spacing:0.108px;right:11.5px;-webkit-text-stroke:0.3px currentColor;">5 of 12</div><div class="cbd"></div></div><div class="card" style="left:926px;top:178px;width:401px;height:285px"><div class="ch"><div class="ctitle" style="top:9.0px;font-size:13.5px;letter-spacing:0.395px;left:16.5px;-webkit-text-stroke:0.3px currentColor;">All Wall Crossings Requiring Review</div><span style="position:absolute;left:321px;top:0"><svg class="cico" width="80" height="32" viewBox="0 0 80 32" fill="none" stroke="#2b2b2b" stroke-width="1.3" stroke-linecap="round"><circle cx="12.6" cy="15.6" r="6"/><path d="M17.2 20.4l2.4 2.1"/><path d="M30.3 15.9A6.7 6.7 0 0 1 42.5 12.1"/><path d="M43.7 15.9A6.7 6.7 0 0 1 31.5 19.7"/><path d="M43.7 9.1V13.5H40.3Z" fill="#2b2b2b" stroke-width="0.9" stroke-linejoin="round"/><path d="M30.9 22.7V18.5H34.5Z" fill="#2b2b2b" stroke-width="0.9" stroke-linejoin="round"/><path d="M56 11.1L65.9 20.7M65.9 11.1L56 20.7" stroke-width="1.4"/></svg></span></div><div class="tb" style="left:12.0px;top:44.0px;width:403.0px;height:203.0px"><div class="thbg" style="height:23.0px"></div><div class="hl1" style="top:23.0px"></div><div class="hl1" style="top:58.0px"></div><div class="hl1" style="top:93.0px"></div><div class="hl1" style="top:129.0px"></div><div class="hl1" style="top:165.0px"></div><div class="vl1" style="left:98.0px"></div><div class="vl1" style="left:249.0px"></div><div class="vl1" style="left:343.0px"></div><div class="th" style="top:4.8px;font-size:10px;letter-spacing:0.533px;left:7.0px;-webkit-text-stroke:0.3px currentColor;">Reference Code</div><div class="th" style="top:4.8px;font-size:10px;letter-spacing:0.514px;left:106.0px;-webkit-text-stroke:0.3px currentColor;">Type</div><div class="th" style="top:4.8px;font-size:10px;letter-spacing:0.439px;left:257.0px;-webkit-text-stroke:0.3px currentColor;">Deal Name</div><div class="th" style="top:4.8px;font-size:10px;letter-spacing:0.623px;left:351.0px;-webkit-text-stroke:0.3px currentColor;">Name</div><div class="td" style="top:28.3px;font-size:10px;letter-spacing:-0.233px;left:7.0px;">WC257455</div><div class="td" style="top:28.7px;font-size:10.5px;letter-spacing:0.120px;left:106.0px;"><span style="letter-spacing:0.120px">Wall Crossing - Public Side</span><br><span style="letter-spacing:0.391px">Employee</span></div><div class="td" style="top:34.3px;font-size:10.5px;letter-spacing:-0.065px;left:257.0px;">WC Demo Deal</div><div class="td" style="top:34.3px;font-size:10.5px;letter-spacing:0.162px;left:351.0px;">Chris</div><div class="td" style="top:63.3px;font-size:10px;letter-spacing:-0.233px;left:7.0px;">WC257473</div><div class="td" style="top:63.7px;font-size:10.5px;letter-spacing:0.120px;left:106.0px;"><span style="letter-spacing:0.120px">Wall Crossing - Public Side</span><br><span style="letter-spacing:0.391px">Employee</span></div><div class="td" style="top:69.3px;font-size:10.5px;letter-spacing:-0.065px;left:257.0px;">WC Demo Deal</div><div class="td" style="top:69.3px;font-size:10.5px;letter-spacing:0.255px;left:351.0px;">Jack</div><div class="td" style="top:98.7px;font-size:10px;letter-spacing:-0.233px;left:7.0px;">WC257439</div><div class="td" style="top:99.0px;font-size:10.5px;letter-spacing:0.120px;left:106.0px;"><span style="letter-spacing:0.120px">Wall Crossing - Public Side</span><br><span style="letter-spacing:0.391px">Employee</span></div><div class="td" style="top:104.8px;font-size:10.5px;letter-spacing:-0.065px;left:257.0px;">WC Demo Deal</div><div class="td" style="top:104.8px;font-size:10.5px;letter-spacing:0.074px;left:351.0px;">Eric</div><div class="td" style="top:134.6px;font-size:10px;letter-spacing:-0.233px;left:7.0px;">WC257440</div><div class="td" style="top:135.0px;font-size:10.5px;letter-spacing:0.120px;left:106.0px;"><span style="letter-spacing:0.120px">Wall Crossing - Public Side</span><br><span style="letter-spacing:0.391px">Employee</span></div><div class="td" style="top:140.8px;font-size:10.5px;letter-spacing:-0.065px;left:257.0px;">WC Demo Deal</div><div class="td" style="top:140.8px;font-size:10.5px;letter-spacing:0.111px;left:351.0px;">Mary</div><div class="td" style="top:170.6px;font-size:10px;letter-spacing:-0.233px;left:7.0px;">WC257463</div><div class="td" style="top:170.9px;font-size:10.5px;letter-spacing:0.120px;left:106.0px;"><span style="letter-spacing:0.120px">Wall Crossing - Public Side</span><br><span style="letter-spacing:0.391px">Employee</span></div><div class="td" style="top:176.8px;font-size:10.5px;letter-spacing:-0.065px;left:257.0px;">WC Demo Deal</div><div class="td" style="top:176.8px;font-size:10.5px;letter-spacing:0.119px;left:351.0px;">Sue</div></div><div class="lu" style="top:255.1px;font-size:10px;letter-spacing:0.301px;left:12.0px;">Last updated 6:00 AM EST</div><div class="cnt" style="top:255.1px;font-size:10px;letter-spacing:0.108px;right:11.5px;-webkit-text-stroke:0.3px currentColor;">5 of 18</div><div class="cbd"></div></div><div class="card" style="left:926px;top:479px;width:401px;height:285px"><div class="ch"><div class="ctitle" style="top:9.0px;font-size:13.5px;letter-spacing:0.335px;left:16.5px;-webkit-text-stroke:0.3px currentColor;">All Deal-MNPI Requiring Review</div><span style="position:absolute;left:321px;top:0"><svg class="cico" width="80" height="32" viewBox="0 0 80 32" fill="none" stroke="#2b2b2b" stroke-width="1.3" stroke-linecap="round"><circle cx="12.6" cy="15.6" r="6"/><path d="M17.2 20.4l2.4 2.1"/><path d="M30.3 15.9A6.7 6.7 0 0 1 42.5 12.1"/><path d="M43.7 15.9A6.7 6.7 0 0 1 31.5 19.7"/><path d="M43.7 9.1V13.5H40.3Z" fill="#2b2b2b" stroke-width="0.9" stroke-linejoin="round"/><path d="M30.9 22.7V18.5H34.5Z" fill="#2b2b2b" stroke-width="0.9" stroke-linejoin="round"/><path d="M56 11.1L65.9 20.7M65.9 11.1L56 20.7" stroke-width="1.4"/></svg></span></div><div class="tb" style="left:12.0px;top:44.0px;width:413.0px;height:203.0px"><div class="thbg" style="height:23.0px"></div><div class="hl1" style="top:23.0px"></div><div class="hl1" style="top:58.0px"></div><div class="hl1" style="top:93.0px"></div><div class="hl1" style="top:129.0px"></div><div class="hl1" style="top:165.0px"></div><div class="vl1" style="left:98.0px"></div><div class="vl1" style="left:220.0px"></div><div class="th" style="top:4.8px;font-size:10px;letter-spacing:0.533px;left:7.0px;-webkit-text-stroke:0.3px currentColor;">Reference Code</div><div class="th" style="top:4.8px;font-size:10px;letter-spacing:0.470px;left:106.0px;-webkit-text-stroke:0.3px currentColor;">Deal Reference Code</div><div class="th" style="top:4.8px;font-size:10px;letter-spacing:0.439px;left:228.0px;-webkit-text-stroke:0.3px currentColor;">Deal Name</div><div class="td" style="top:28.4px;font-size:10px;letter-spacing:-0.245px;left:7.0px;">MNPI257435</div><div class="td" style="top:29.1px;font-size:10px;letter-spacing:-0.250px;left:106.0px;">DEAL257435</div><div class="td" style="top:29.8px;font-size:10.5px;letter-spacing:0.292px;left:228.0px;"><span style="letter-spacing:0.292px">Manand_Deal smoke test</span><br><span style="letter-spacing:-0.250px">CCR3022</span></div><div class="td" style="top:63.0px;font-size:10px;letter-spacing:-0.245px;left:7.0px;">MNPI257438</div><div class="td" style="top:63.0px;font-size:10px;letter-spacing:-0.250px;left:106.0px;">DEAL257444</div><div class="td" style="top:69.3px;font-size:10.5px;letter-spacing:0.164px;left:228.0px;">Smoke Test Deal</div><div class="td" style="top:99.2px;font-size:10px;letter-spacing:-0.245px;left:7.0px;">MNPI257441</div><div class="td" style="top:99.2px;font-size:10px;letter-spacing:-0.250px;left:106.0px;">DEAL257445</div><div class="td" style="top:104.8px;font-size:10.5px;letter-spacing:0.164px;left:228.0px;">Smoke Test Deal</div><div class="td" style="top:135.1px;font-size:10px;letter-spacing:-0.245px;left:7.0px;">MNPI257448</div><div class="td" style="top:135.1px;font-size:10px;letter-spacing:-0.250px;left:106.0px;">DEAL257482</div><div class="td" style="top:140.8px;font-size:10.5px;letter-spacing:0.289px;left:228.0px;">Demo</div><div class="td" style="top:171.0px;font-size:10px;letter-spacing:-0.245px;left:7.0px;">MNPI257450</div><div class="td" style="top:171.0px;font-size:10px;letter-spacing:-0.250px;left:106.0px;">DEAL257482</div><div class="td" style="top:176.8px;font-size:10.5px;letter-spacing:0.161px;left:228.0px;">Demo Deal</div></div><div class="lu" style="top:255.1px;font-size:10px;letter-spacing:0.301px;left:12.0px;">Last updated 6:00 AM EST</div><div class="cnt" style="top:255.1px;font-size:10px;letter-spacing:0.145px;right:11.5px;-webkit-text-stroke:0.3px currentColor;">5 of 6</div><div class="cbd"></div></div></div></body></html>
